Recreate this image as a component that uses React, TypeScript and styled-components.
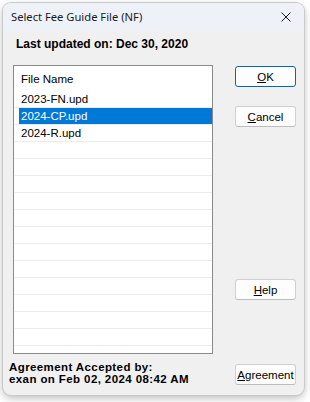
import React from "react";
import styled, { createGlobalStyle } from "styled-components";

const Global = createGlobalStyle`
  html, body { margin: 0; padding: 0; background: #ffffff; }
  body { width: 310px; height: 402px; overflow: hidden; }
`;

const Page = styled.div`
  width: 310px;
  height: 402px;
  padding: 3px 0 0 3px;
  box-sizing: border-box;
`;

const Window = styled.div`
  width: 301px;
  height: 392px;
  border-radius: 8px;
  overflow: hidden;
  background: #f0f0f0;
  box-shadow: 0 0 0 1px #c9c9c9, 0 3px 8px rgba(0, 0, 0, 0.28);
  display: flex;
  flex-direction: column;
  font-family: "Liberation Sans", Arial, sans-serif;
  color: #000;
`;

const TitleBar = styled.div`
  height: 28px;
  flex: none;
  background: #eef2f8;
  display: flex;
  align-items: center;
  justify-content: space-between;
  padding: 0 9px 0 8px;
`;

const Title = styled.span`
  font-family: "Noto Sans", "Liberation Sans", sans-serif;
  font-size: 11.2px;
  color: #1a1a1a;
  margin-top: -1px;
`;

const CloseIcon = styled.svg`
  width: 10px;
  height: 10px;
  margin-right: 4px;
`;

const Heading = styled.div`
  font-size: 12px;
  font-weight: bold;
  line-height: 14px;
  padding: 6px 0 0 13px;
  height: 14px;
`;

const Main = styled.div`
  display: flex;
  margin-top: 14px;
  padding-left: 10px;
  height: 288px;
`;

const ListBox = styled.div`
  width: 200px;
  height: 289px;
  box-sizing: border-box;
  border: 1px solid #8a8a8a;
  background: #ffffff;
  overflow: hidden;
`;

const Header = styled.div`
  height: 25px;
  display: flex;
  align-items: center;
  padding-left: 7px;
  font-size: 11.5px;
`;

const Row = styled.div`
  height: 16px;
  margin: 0 0 0 1px;
  border-bottom: 1px solid #ebebeb;
  display: flex;
`;

const Cell = styled.div<{ $selected?: boolean }>`
  flex: 1;
  margin-left: 4px;
  padding-left: 2px;
  font-size: 11.5px;
  line-height: 17px;
  background: ${(p) => (p.$selected ? "#0078d7" : "transparent")};
  color: ${(p) => (p.$selected ? "#ffffff" : "#000000")};
`;

const ButtonCol = styled.div`
  display: flex;
  flex-direction: column;
  margin-left: 22px;
  padding-top: 1px;
`;

const Button = styled.div<{ $default?: boolean; $mt?: number }>`
  width: 61px;
  height: 21px;
  box-sizing: border-box;
  border-radius: 3px;
  border: 1px solid ${(p) => (p.$default ? "#0067c0" : "#d0d0d0")};
  border-bottom-color: ${(p) => (p.$default ? "#0067c0" : "#bcbcbc")};
  background: #fdfdfd;
  display: flex;
  align-items: center;
  justify-content: center;
  font-size: 11.5px;
  margin-top: ${(p) => p.$mt ?? 0}px;
  u { text-decoration: underline; text-underline-offset: 1px; }
`;

const Footer = styled.div`
  display: flex;
  align-items: flex-start;
  justify-content: space-between;
  padding: 8px 8px 0 6px;
`;

const FooterLine = styled.div`
  font-size: 11.5px;
  font-weight: bold;
  letter-spacing: 0.4px;
  line-height: 12px;
  height: 12px;
  white-space: nowrap;
`;

const files = ["2023-FN.upd", "2024-CP.upd", "2024-R.upd"];

export default function App() {
  const rows = Array.from({ length: 15 }, (_, i) => files[i] ?? "");
  return (
    <>
      <Global />
      <Page>
        <Window>
          <TitleBar>
            <Title>Select Fee Guide File (NF)</Title>
            <CloseIcon viewBox="0 0 10 10">
              <path d="M0.5 0.5 L9.5 9.5 M9.5 0.5 L0.5 9.5" stroke="#1a1a1a" strokeWidth="1" fill="none" />
            </CloseIcon>
          </TitleBar>
          <Heading>Last updated on: Dec 30, 2020</Heading>
          <Main>
            <ListBox>
              <Header>File Name</Header>
              {rows.map((f, i) => (
                <Row key={i}>
                  <Cell $selected={i === 1}>{f}</Cell>
                </Row>
              ))}
            </ListBox>
            <ButtonCol>
              <Button $default>
                <span><u>O</u>K</span>
              </Button>
              <Button $mt={19}>
                <span><u>C</u>ancel</span>
              </Button>
              <Button $mt={152}>
                <span><u>H</u>elp</span>
              </Button>
            </ButtonCol>
          </Main>
          <Footer>
            <div>
              <FooterLine>Agreement Accepted by:</FooterLine>
              <FooterLine>exan on Feb 02, 2024 08:42 AM</FooterLine>
            </div>
            <Button $mt={3}>
              <span><u>A</u>greement</span>
            </Button>
          </Footer>
        </Window>
      </Page>
    </>
  );
}
